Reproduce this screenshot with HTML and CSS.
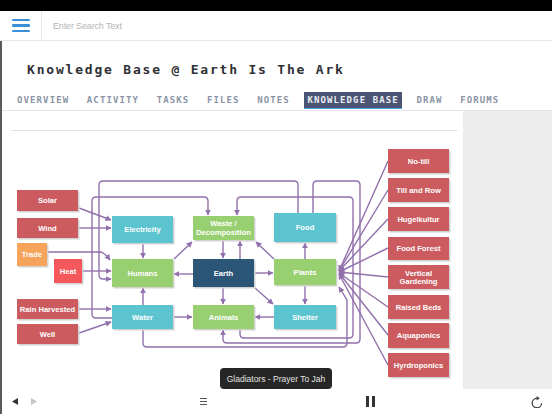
FILE: index.html
```html
<!DOCTYPE html>
<html>
<head>
<meta charset="utf-8">
<title>Knowledge Base @ Earth Is The Ark</title>
<link rel="stylesheet" href="styles.css">
</head>
<body>
<div class="statusbar"></div>
<header class="header">
  <div class="menu-btn"><span></span><span></span><span></span></div>
  <div class="search">Enter Search Text</div>
</header>
<div class="page">
  <h1 class="title">Knowledge Base @ Earth Is The Ark</h1>
  <nav class="tabs">
    <span class="tab">OVERVIEW</span>
    <span class="tab">ACTIVITY</span>
    <span class="tab">TASKS</span>
    <span class="tab">FILES</span>
    <span class="tab">NOTES</span>
    <span class="tab active">KNOWLEDGE BASE</span>
    <span class="tab">DRAW</span>
    <span class="tab">FORUMS</span>
  </nav>
  <div class="content">
    <div class="canvas">
      <div class="rule"></div>
      <svg class="diagram" width="461" height="257" viewBox="2 132 461 257">
        <defs>
          <marker id="a" viewBox="0 0 10 10" refX="9" refY="5" markerWidth="6" markerHeight="6" markerUnits="userSpaceOnUse" orient="auto">
            <path class="ah" d="M0,0 L10,5 L0,10 z"/>
          </marker>
        </defs>
        <g class="links">
          <path d="M79,208 L111,220"/>
          <path d="M79,228 H111"/>
          <path d="M48,252 H100 Q104,252 110,260"/>
          <path d="M83,271 H111"/>
          <path d="M298,213 V185 Q298,181 294,181 H103 Q99,181 99,185 V275 Q99,279 103,279 H111"/>
          <path d="M79,309 H111"/>
          <path d="M79,333 L111,322"/>
          <path d="M112,318 H96 Q92,318 92,314 V201 Q92,197 96,197 H204 Q208,197 208,201 V215"/>
          <path d="M143,243 V258"/>
          <path d="M143,305 V288"/>
          <path d="M174,259 L192,242"/>
          <path d="M193,274 H174"/>
          <path d="M174,317 H192"/>
          <path d="M223,240 V258"/>
          <path d="M240,259 V241"/>
          <path d="M223,287 V304"/>
          <path d="M254,273 H273"/>
          <path d="M255,288 L273,304"/>
          <path d="M274,259 L256,242"/>
          <path d="M305,259 V243"/>
          <path d="M305,285 V304"/>
          <path d="M274,317 H255"/>
          <path d="M240,329 V334 Q240,338 244,338 H349 Q353,338 353,334 V201 Q353,197 349,197 H241 Q237,197 237,201 V215"/>
          <path d="M313,213 V185 Q313,181 317,181 H356 Q360,181 360,185 V339 Q360,343 356,343 H227 Q223,343 223,339 V330"/>
          <path d="M143,329 V343 Q143,347 147,347 H343 Q347,347 347,343 V300 L339,287"/>
          <path d="M388,161 L339,271"/>
          <path d="M388,190 L339,271"/>
          <path d="M388,219 L339,271"/>
          <path d="M388,248 L339,272"/>
          <path d="M388,277 L339,272"/>
          <path d="M388,307 L339,273"/>
          <path d="M388,335 L339,273"/>
          <path d="M388,365 L339,274"/>
        </g>
        <g class="node red"><rect class="sh" x="18.5" y="191.5" width="61" height="21"/><rect class="bx" x="17" y="190" width="61" height="21"/><text x="47.5" y="203.2">Solar</text></g>
        <g class="node red"><rect class="sh" x="18.5" y="219.5" width="61" height="20"/><rect class="bx" x="17" y="218" width="61" height="20"/><text x="47.5" y="230.7">Wind</text></g>
        <g class="node orange"><rect class="sh" x="18.5" y="244.5" width="30" height="23"/><rect class="bx" x="17" y="243" width="30" height="23"/><text x="32" y="257.2">Trade</text></g>
        <g class="node heat"><rect class="sh" x="55.5" y="260.5" width="28" height="24"/><rect class="bx" x="54" y="259" width="28" height="24"/><text x="68" y="273.7">Heat</text></g>
        <g class="node red"><rect class="sh" x="18.5" y="300.5" width="61" height="20"/><rect class="bx" x="17" y="299" width="61" height="20"/><text x="47.5" y="311.7">Rain Harvested</text></g>
        <g class="node red"><rect class="sh" x="18.5" y="325.5" width="61" height="20"/><rect class="bx" x="17" y="324" width="61" height="20"/><text x="47.5" y="336.7">Well</text></g>

        <g class="node teal"><rect class="sh" x="113.5" y="217.5" width="61" height="27"/><rect class="bx" x="112" y="216" width="61" height="27"/><text x="142.5" y="232.2">Electricity</text></g>
        <g class="node green"><rect class="sh" x="113.5" y="260.5" width="61" height="28"/><rect class="bx" x="112" y="259" width="61" height="28"/><text x="142.5" y="275.7">Humans</text></g>
        <g class="node teal"><rect class="sh" x="113.5" y="306.5" width="61" height="24"/><rect class="bx" x="112" y="305" width="61" height="24"/><text x="142.5" y="319.7">Water</text></g>

        <g class="node green"><rect class="sh" x="194.5" y="217.5" width="61" height="24"/><rect class="bx" x="193" y="216" width="61" height="24"/><text x="223.5" y="226">Waste /</text><text x="223.5" y="235">Decomposition</text></g>
        <g class="node navy"><rect class="sh" x="194.5" y="260.5" width="61" height="28"/><rect class="bx" x="193" y="259" width="61" height="28"/><text x="223.5" y="275.7">Earth</text></g>
        <g class="node green"><rect class="sh" x="194.5" y="306.5" width="61" height="24"/><rect class="bx" x="193" y="305" width="61" height="24"/><text x="223.5" y="319.7">Animals</text></g>

        <g class="node teal"><rect class="sh" x="275.5" y="214.5" width="62" height="29"/><rect class="bx" x="274" y="213" width="62" height="29"/><text x="305" y="230.2">Food</text></g>
        <g class="node green"><rect class="sh" x="275.5" y="260.5" width="62" height="26"/><rect class="bx" x="274" y="259" width="62" height="26"/><text x="305" y="274.7">Plants</text></g>
        <g class="node teal"><rect class="sh" x="275.5" y="306.5" width="62" height="24"/><rect class="bx" x="274" y="305" width="62" height="24"/><text x="305" y="319.7">Shelter</text></g>

        <g class="node red"><rect class="sh" x="389.5" y="150.5" width="61" height="24"/><rect class="bx" x="388" y="149" width="61" height="24"/><text x="418.5" y="163.7">No-till</text></g>
        <g class="node red"><rect class="sh" x="389.5" y="179.5" width="61" height="24"/><rect class="bx" x="388" y="178" width="61" height="24"/><text x="418.5" y="192.7">Till and Row</text></g>
        <g class="node red"><rect class="sh" x="389.5" y="208.5" width="61" height="24"/><rect class="bx" x="388" y="207" width="61" height="24"/><text x="418.5" y="221.7">Hugelkultur</text></g>
        <g class="node red"><rect class="sh" x="389.5" y="238.5" width="61" height="23"/><rect class="bx" x="388" y="237" width="61" height="23"/><text x="418.5" y="251.2">Food Forest</text></g>
        <g class="node red"><rect class="sh" x="389.5" y="266.5" width="61" height="24"/><rect class="bx" x="388" y="265" width="61" height="24"/><text x="418.5" y="276">Vertical</text><text x="418.5" y="284.4">Gardening</text></g>
        <g class="node red"><rect class="sh" x="389.5" y="296.5" width="61" height="24"/><rect class="bx" x="388" y="295" width="61" height="24"/><text x="418.5" y="309.7">Raised Beds</text></g>
        <g class="node red"><rect class="sh" x="389.5" y="324.5" width="61" height="25"/><rect class="bx" x="388" y="323" width="61" height="25"/><text x="418.5" y="338.2">Aquaponics</text></g>
        <g class="node red"><rect class="sh" x="389.5" y="354.5" width="61" height="24"/><rect class="bx" x="388" y="353" width="61" height="24"/><text x="418.5" y="367.7">Hyrdroponics</text></g>
      </svg>
    </div>
    <aside class="side"></aside>
  </div>
  <footer class="toolbar">
    <svg class="tb-prev" width="6" height="7" viewBox="0 0 6 7"><path d="M6,0 L0,3.5 L6,7 z"/></svg>
    <svg class="tb-next" width="6" height="7" viewBox="0 0 6 7"><path d="M0,0 L6,3.5 L0,7 z"/></svg>
    <svg class="tb-list" width="7" height="7" viewBox="0 0 7 7"><path d="M0,0.5 H7 M0,3.5 H7 M0,6.5 H7"/></svg>
    <svg class="tb-pause" width="9" height="11" viewBox="0 0 9 11"><rect x="0" y="0" width="3" height="11"/><rect x="6" y="0" width="3" height="11"/></svg>
    <svg class="tb-reload" width="12" height="12" viewBox="0 0 12 12"><path class="arc" d="M10.6,7.2 A4.7,4.7 0 1 1 6,2.3"/><path class="tip" d="M5.6,0 L8.8,2.3 L5.6,4.6 z"/></svg>
  </footer>
</div>
<div class="tooltip">Gladiators - Prayer To Jah</div>
</body>
</html>
```
FILE: styles.css
```css
* { box-sizing: border-box; }
html, body { margin: 0; padding: 0; }
body {
  width: 552px;
  height: 414px;
  overflow: hidden;
  position: relative;
  background: #ffffff;
  font-family: "Liberation Sans", Arial, sans-serif;
}
.statusbar { height: 11px; background: #000; }
.header {
  height: 30px;
  display: flex;
  border-bottom: 1px solid #e6e8eb;
}
.menu-btn {
  width: 42px;
  border-right: 1px solid #e9e9e9;
  display: flex;
  flex-direction: column;
  justify-content: center;
  gap: 3.2px;
  padding-left: 12px;
}
.menu-btn span {
  display: block;
  width: 18px;
  height: 2.5px;
  border-radius: 1px;
  background: #3b8fd6;
}
.search {
  display: flex;
  align-items: center;
  padding-left: 11px;
  font-size: 9px;
  letter-spacing: -0.15px;
  color: #b4b4b4;
}
.page {
  height: 373px;
  border-left: 2px solid #5a5a5a;
  display: flex;
  flex-direction: column;
}
.title {
  margin: 21px 0 0 25px;
  font: bold 13px/16px "DejaVu Sans Mono", monospace;
  letter-spacing: 1.8px;
  color: #2f3036;
  white-space: nowrap;
}
.tabs {
  margin-top: 14px;
  display: flex;
  gap: 11.6px;
  padding: 0 0 1px 12px;
  border-bottom: 1px solid #dfe3ea;
}
.tab {
  height: 17px;
  padding: 1px 3px 0;
  font: bold 9px/15px "DejaVu Sans Mono", monospace;
  letter-spacing: 1.11px;
  color: #8b94a6;
  white-space: nowrap;
}
.tab.active {
  background: #4b5573;
  color: #e9ecf3;
  border-bottom: 1px solid #4aa3e0;
}
.content {
  height: 278px;
  display: flex;
}
.canvas {
  flex: 1;
  display: flex;
  flex-direction: column;
  background: #fff;
}
.rule {
  margin: 19px 5px 0 9px;
  height: 1px;
  background: #e4e4e4;
}
.diagram { display: block; margin-top: 1px; }
.links path {
  fill: none;
  stroke: #9170ab;
  stroke-width: 1.4;
  marker-end: url(#a);
}
.ah { fill: #9170ab; }
.node .sh { fill: #d2d2d2; }
.node text {
  fill: #ffffff;
  font: bold 7.6px "Liberation Sans", Arial, sans-serif;
  text-anchor: middle;
}
.red .bx { fill: #cb5b5e; }
.orange .bx { fill: #f6a45b; }
.heat .bx { fill: #f4585b; }
.teal .bx { fill: #5bc4ce; }
.green .bx { fill: #98cf71; }
.navy .bx { fill: #2b5677; }
.side {
  width: 89px;
  background: #ededed;
}
.toolbar {
  height: 25px;
  display: flex;
  align-items: center;
  background: #fff;
}
.tb-prev { margin-left: 10px; fill: #333; }
.tb-next { margin-left: 13px; fill: #c6c6c6; }
.tb-list { margin-left: 163px; stroke: #555; stroke-width: 1; fill: none; }
.tb-pause { margin-left: 159px; fill: #333; }
.tb-reload { margin-left: 156px; }
.tb-reload .arc { fill: none; stroke: #444; stroke-width: 1.3; }
.tb-reload .tip { fill: #444; }
.tooltip {
  position: absolute;
  left: 220px;
  top: 368px;
  width: 112px;
  height: 21px;
  border-radius: 4px;
  background: #262626;
  color: #e4e4e4;
  font-size: 8.5px;
  display: flex;
  align-items: center;
  justify-content: center;
  white-space: nowrap;
}
```
